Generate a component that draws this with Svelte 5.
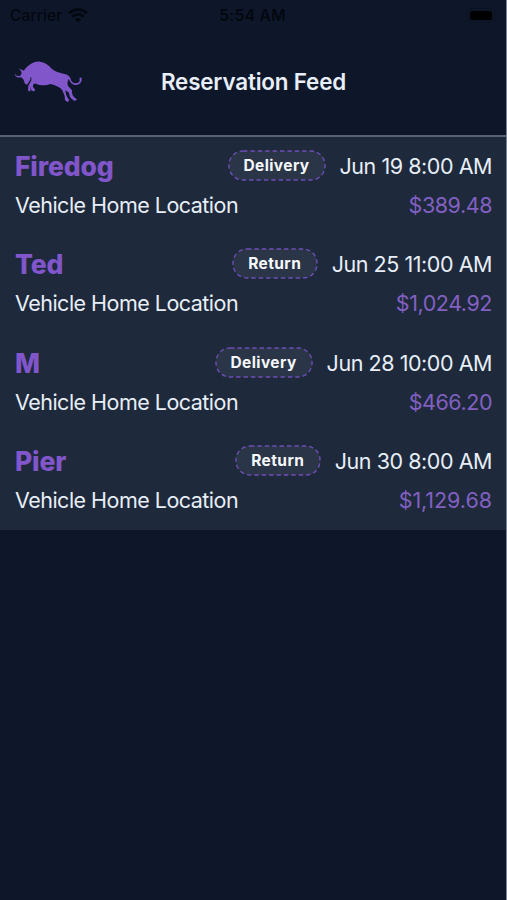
<script>
  const reservations = [
    { name: 'Firedog', kind: 'Delivery', date: 'Jun 19 8:00 AM', price: '$389.48', tracking: -0.45 },
    { name: 'Ted', kind: 'Return', date: 'Jun 25 11:00 AM', price: '$1,024.92', tracking: -0.45 },
    { name: 'M', kind: 'Delivery', date: 'Jun 28 10:00 AM', price: '$466.20', tracking: -0.45 },
    { name: 'Pier', kind: 'Return', date: 'Jun 30 8:00 AM', price: '$1,129.68', tracking: -0.05 }
  ];
</script>

<div class="screen">
  <div class="status">
    <div class="carrier">
      <span>Carrier</span>
      <svg width="20" height="15" viewBox="0 0 20 15" fill="none" stroke="#02050a" stroke-width="2.7">
        <path d="M1 5.4C6 .3 14 .3 19 5.4M4.2 8.8C7.5 5.5 12.5 5.5 15.8 8.8" />
        <path d="M10 14.4 6.9 11.3Q10 8.8 13.1 11.3Z" fill="#02050a" stroke="none" />
      </svg>
    </div>
    <span class="time">5:54 AM</span>
    <div class="battery"><i></i></div>
  </div>

  <header>
    <svg class="logo" width="70" height="44" viewBox="42 30 210 132" fill="#8256cb" aria-label="Bull">
      <path d="M45 69C45 76 52 80 61 77L65 70C64 63 61 62 57 55C62 60 68 60 72 62C76 55 80 51 87 46C96 38 108 34 120 35C134 36 145 44 155 56C162 63 176 67 190 71C200 72 208 77 211 84C213 94 218 101 228 100C238 99 241 93 238 85L244 82C248 94 241 103 230 105C219 106 211 99 206 86C202 95 201 102 205 109L216 121C215 133 218 139 231 148L225 153C212 146 208 139 207 128L196 121C197 134 201 141 208 151L203 156L195 151L194 138L187 121C180 111 167 106 151 102C137 108 121 107 108 101C101 100 98 104 99 111L106 120L102 124L95 122L91 110L92 121L87 125L84 119L85 107L94 91L94 83L91 82L91 89L81 104L75 101L70 88L63 82C52 84 43 79 45 69Z" />
    </svg>
    <h1>Reservation Feed</h1>
  </header>

  <main>
    {#each reservations as r}
      <article>
        <div class="line top">
          <h2>{r.name}</h2>
          <div class="when">
            <span class="pill {r.kind.toLowerCase()}">
              <svg width="100%" height="100%"><rect x="1" y="1" rx="14" ry="14" /></svg>
              <b>{r.kind}</b>
            </span>
            <span class="date">{r.date}</span>
          </div>
        </div>
        <div class="line bottom">
          <span class="place">Vehicle Home Location</span>
          <span class="price" style="letter-spacing: {r.tracking}px">{r.price}</span>
        </div>
      </article>
    {/each}
  </main>
</div>

<style>
  :global(body) { background: #0e172a; }
  .screen {
    box-sizing: border-box;
    width: 507px;
    height: 900px;
    overflow: hidden;
    display: flex;
    flex-direction: column;
    background: #0e172a;
    border-right: 1px solid #7d8592;
    font-family: Inter, "Liberation Sans", sans-serif;
    color: #e7eef7;
  }
  .status {
    height: 30px;
    flex: none;
    display: grid;
    grid-template-columns: 1fr auto 1fr;
    align-items: center;
    padding: 0 11px 0 10px;
    color: #02050a;
    font-size: 15.5px;
    font-weight: 500;
  }
  .carrier { display: flex; align-items: center; gap: 6px; opacity: .85; letter-spacing: .1px; }
  .time { font-weight: 600; font-size: 15.5px; letter-spacing: .35px; opacity: .85; }
  .battery {
    justify-self: end;
    box-sizing: border-box;
    width: 28px;
    height: 15px;
    padding: 2px;
    border: 1px solid #0b1220;
    border-radius: 5px;
  }
  .battery i { display: block; height: 100%; background: #000; border-radius: 2px; }
  header {
    height: 104px;
    flex: none;
    display: grid;
    grid-template-columns: 1fr auto 1fr;
    align-items: center;
    padding-bottom: 1px;
    border-bottom: 2px solid #586273;
  }
  .logo { margin-left: 14px; }
  h1 { margin: 0 0 1px 1px; font-size: 22.4px; font-weight: 600; line-height: 28px; letter-spacing: -.17px; }
  main { flex: none; background: #1e293b; }
  article { height: 98.25px; box-sizing: border-box; padding: 11px 14px 0 15px; }
  .line { display: flex; justify-content: space-between; align-items: center; white-space: nowrap; }
  .top { height: 36px; }
  .bottom { height: 42px; }
  h2 { margin: 0; font-size: 26.5px; font-weight: 800; letter-spacing: -.15px; color: #8256cb; line-height: 36px; }
  .when { display: flex; align-items: center; gap: 14px; }
  .pill {
    display: grid;
    place-items: center;
    width: 98px;
    height: 31px;
    margin-top: -1px;
    font-size: 15.5px;
    color: #f5f8fc;
  }
  .pill.return { width: 86px; }
  .pill svg, .pill b { grid-area: 1 / 1; }
  .pill b { font-weight: 700; letter-spacing: .4px; }
  .pill rect {
    width: calc(100% - 2px);
    height: calc(100% - 2px);
    fill: #2a3547;
    stroke: #6d4db5;
    stroke-width: 1.4;
    stroke-dasharray: 4.4 3;
  }
  .date, .place, .price { font-size: 21.5px; }
  .date { letter-spacing: -.45px; }
  .place { letter-spacing: -.52px; }
  .price { color: #8260c2; }
</style>
